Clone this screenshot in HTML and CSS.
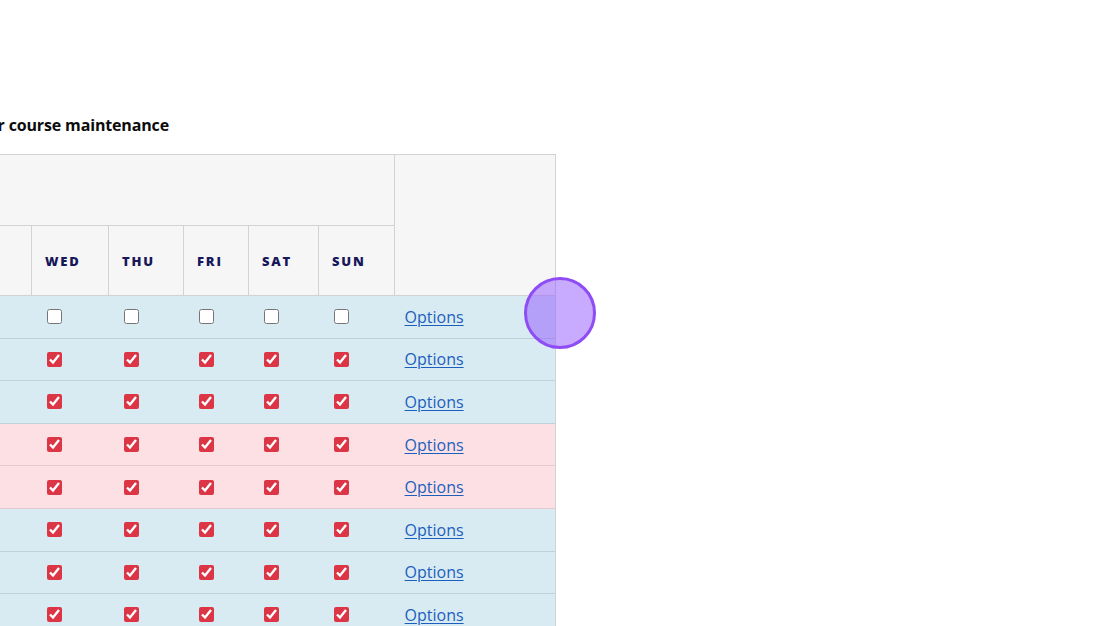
FILE: index.html
```html
<!DOCTYPE html>
<html lang="en">
<head>
<meta charset="utf-8">
<title>Course maintenance</title>
<link rel="stylesheet" href="styles.css">
</head>
<body>
<main class="page">
  <div class="heading-row">
    <h2 class="heading">Weekly closures for course maintenance</h2>
  </div>
  <div class="scroller">
    <table class="schedule">
      <colgroup>
        <col class="c-name">
        <col class="c-mon">
        <col class="c-tue">
        <col class="c-wed">
        <col class="c-thu">
        <col class="c-fri">
        <col class="c-sat">
        <col class="c-sun">
        <col class="c-opt">
      </colgroup>
      <thead>
        <tr class="head-top">
          <th class="name-head" rowspan="2">Course</th>
          <th class="days-head" colspan="7"><span class="days-label">Days</span></th>
          <th class="opt-head" rowspan="2"></th>
        </tr>
        <tr class="head-days">
          <th class="day day-mon">MON</th>
          <th class="day day-tue">TUE</th>
          <th class="day">WED</th>
          <th class="day">THU</th>
          <th class="day">FRI</th>
          <th class="day">SAT</th>
          <th class="day">SUN</th>
        </tr>
      </thead>
      <tbody>
        <tr class="row-blue">
          <td class="name">Front nine</td>
          <td class="cb"><input type="checkbox"></td>
          <td class="cb"><input type="checkbox"></td>
          <td class="cb"><input type="checkbox"></td>
          <td class="cb"><input type="checkbox"></td>
          <td class="cb"><input type="checkbox"></td>
          <td class="cb"><input type="checkbox"></td>
          <td class="cb"><input type="checkbox"></td>
          <td class="opt"><a href="#">Options</a></td>
        </tr>
        <tr class="row-blue">
          <td class="name">Back nine</td>
          <td class="cb"><input type="checkbox" checked></td>
          <td class="cb"><input type="checkbox" checked></td>
          <td class="cb"><input type="checkbox" checked></td>
          <td class="cb"><input type="checkbox" checked></td>
          <td class="cb"><input type="checkbox" checked></td>
          <td class="cb"><input type="checkbox" checked></td>
          <td class="cb"><input type="checkbox" checked></td>
          <td class="opt"><a href="#">Options</a></td>
        </tr>
        <tr class="row-blue">
          <td class="name">Driving range</td>
          <td class="cb"><input type="checkbox" checked></td>
          <td class="cb"><input type="checkbox" checked></td>
          <td class="cb"><input type="checkbox" checked></td>
          <td class="cb"><input type="checkbox" checked></td>
          <td class="cb"><input type="checkbox" checked></td>
          <td class="cb"><input type="checkbox" checked></td>
          <td class="cb"><input type="checkbox" checked></td>
          <td class="opt"><a href="#">Options</a></td>
        </tr>
        <tr class="row-pink">
          <td class="name">Putting green</td>
          <td class="cb"><input type="checkbox" checked></td>
          <td class="cb"><input type="checkbox" checked></td>
          <td class="cb"><input type="checkbox" checked></td>
          <td class="cb"><input type="checkbox" checked></td>
          <td class="cb"><input type="checkbox" checked></td>
          <td class="cb"><input type="checkbox" checked></td>
          <td class="cb"><input type="checkbox" checked></td>
          <td class="opt"><a href="#">Options</a></td>
        </tr>
        <tr class="row-pink">
          <td class="name">Chipping area</td>
          <td class="cb"><input type="checkbox" checked></td>
          <td class="cb"><input type="checkbox" checked></td>
          <td class="cb"><input type="checkbox" checked></td>
          <td class="cb"><input type="checkbox" checked></td>
          <td class="cb"><input type="checkbox" checked></td>
          <td class="cb"><input type="checkbox" checked></td>
          <td class="cb"><input type="checkbox" checked></td>
          <td class="opt"><a href="#">Options</a></td>
        </tr>
        <tr class="row-blue">
          <td class="name">Executive course</td>
          <td class="cb"><input type="checkbox" checked></td>
          <td class="cb"><input type="checkbox" checked></td>
          <td class="cb"><input type="checkbox" checked></td>
          <td class="cb"><input type="checkbox" checked></td>
          <td class="cb"><input type="checkbox" checked></td>
          <td class="cb"><input type="checkbox" checked></td>
          <td class="cb"><input type="checkbox" checked></td>
          <td class="opt"><a href="#">Options</a></td>
        </tr>
        <tr class="row-blue">
          <td class="name">Practice bunker</td>
          <td class="cb"><input type="checkbox" checked></td>
          <td class="cb"><input type="checkbox" checked></td>
          <td class="cb"><input type="checkbox" checked></td>
          <td class="cb"><input type="checkbox" checked></td>
          <td class="cb"><input type="checkbox" checked></td>
          <td class="cb"><input type="checkbox" checked></td>
          <td class="cb"><input type="checkbox" checked></td>
          <td class="opt"><a href="#">Options</a></td>
        </tr>
        <tr class="row-blue">
          <td class="name">Clubhouse lawn</td>
          <td class="cb"><input type="checkbox" checked></td>
          <td class="cb"><input type="checkbox" checked></td>
          <td class="cb"><input type="checkbox" checked></td>
          <td class="cb"><input type="checkbox" checked></td>
          <td class="cb"><input type="checkbox" checked></td>
          <td class="cb"><input type="checkbox" checked></td>
          <td class="cb"><input type="checkbox" checked></td>
          <td class="opt"><a href="#">Options</a></td>
        </tr>
      </tbody>
    </table>
  </div>
  <div class="cursor-dot" aria-hidden="true"></div>
</main>
</body>
</html>
```
FILE: styles.css
```css
html, body {
  margin: 0;
  padding: 0;
  background: #ffffff;
  overflow: hidden;
}

body {
  font-family: "Open Sans", "Noto Sans", "Liberation Sans", sans-serif;
  color: #111111;
}

.page {
  position: relative;
  width: 1120px;
  height: 626px;
  overflow: hidden;
  padding-top: 114px;
  box-sizing: border-box;
}

.heading-row {
  display: flex;
}

.heading {
  margin: 0 0 0 -500px;
  width: 669px;
  flex: none;
  text-align: right;
  white-space: nowrap;
  font-size: 16px;
  line-height: 22px;
  font-weight: 700;
  letter-spacing: -0.15px;
  color: #0c0c0c;
}

.scroller {
  margin-top: 18px;
  margin-left: -381px;
}

.schedule {
  border-collapse: collapse;
  table-layout: fixed;
  width: 936px;
}

.c-name { width: 260px; }
.c-mon { width: 76px; }
.c-tue { width: 76px; }
.c-wed { width: 77px; }
.c-thu { width: 75px; }
.c-fri { width: 65px; }
.c-sat { width: 70px; }
.c-sun { width: 76px; }
.c-opt { width: 161px; }

.schedule th {
  background: #f6f6f6;
  border: 1px solid #d3d3d3;
  text-align: left;
  vertical-align: middle;
  padding: 0 0 0 13px;
}

.head-top {
  height: 71px;
}

.head-days {
  height: 70px;
}

.days-label {
  font-size: 13px;
  color: #1a1a5e;
}

.day {
  font-size: 13px;
  font-weight: 800;
  letter-spacing: 1.8px;
  color: #17175a;
}

.day-mon, .day-tue {
  color: #aeb4e6;
}

.schedule td {
  border-top: 1px solid #bfd1d9;
  border-bottom: 1px solid #bfd1d9;
  padding: 0;
  vertical-align: middle;
}

.schedule tbody tr {
  height: 42.6px;
}

.row-blue td {
  background: #d8ebf3;
}

.row-pink td {
  background: #fde0e4;
  border-color: #e8c8ce;
}

.schedule td.opt {
  border-right: 1px solid #d3d3d3;
  padding-left: 10px;
}

.schedule td.name {
  padding-left: 13px;
  font-size: 15px;
}

.schedule td.cb {
  padding-left: 15px;
  line-height: 0;
}

.cb input {
  width: 15px;
  height: 15px;
  margin: 0;
  accent-color: #dc3545;
  vertical-align: middle;
}

.opt a {
  font-size: 16px;
  line-height: 22px;
  color: #1c5fbd;
  text-decoration: underline;
  text-underline-offset: 2px;
}

.cursor-dot {
  position: absolute;
  left: 524px;
  top: 277px;
  width: 66px;
  height: 66px;
  border-radius: 50%;
  border: 3px solid #8d4cf5;
  background: rgba(150, 92, 255, 0.52);
}
```
